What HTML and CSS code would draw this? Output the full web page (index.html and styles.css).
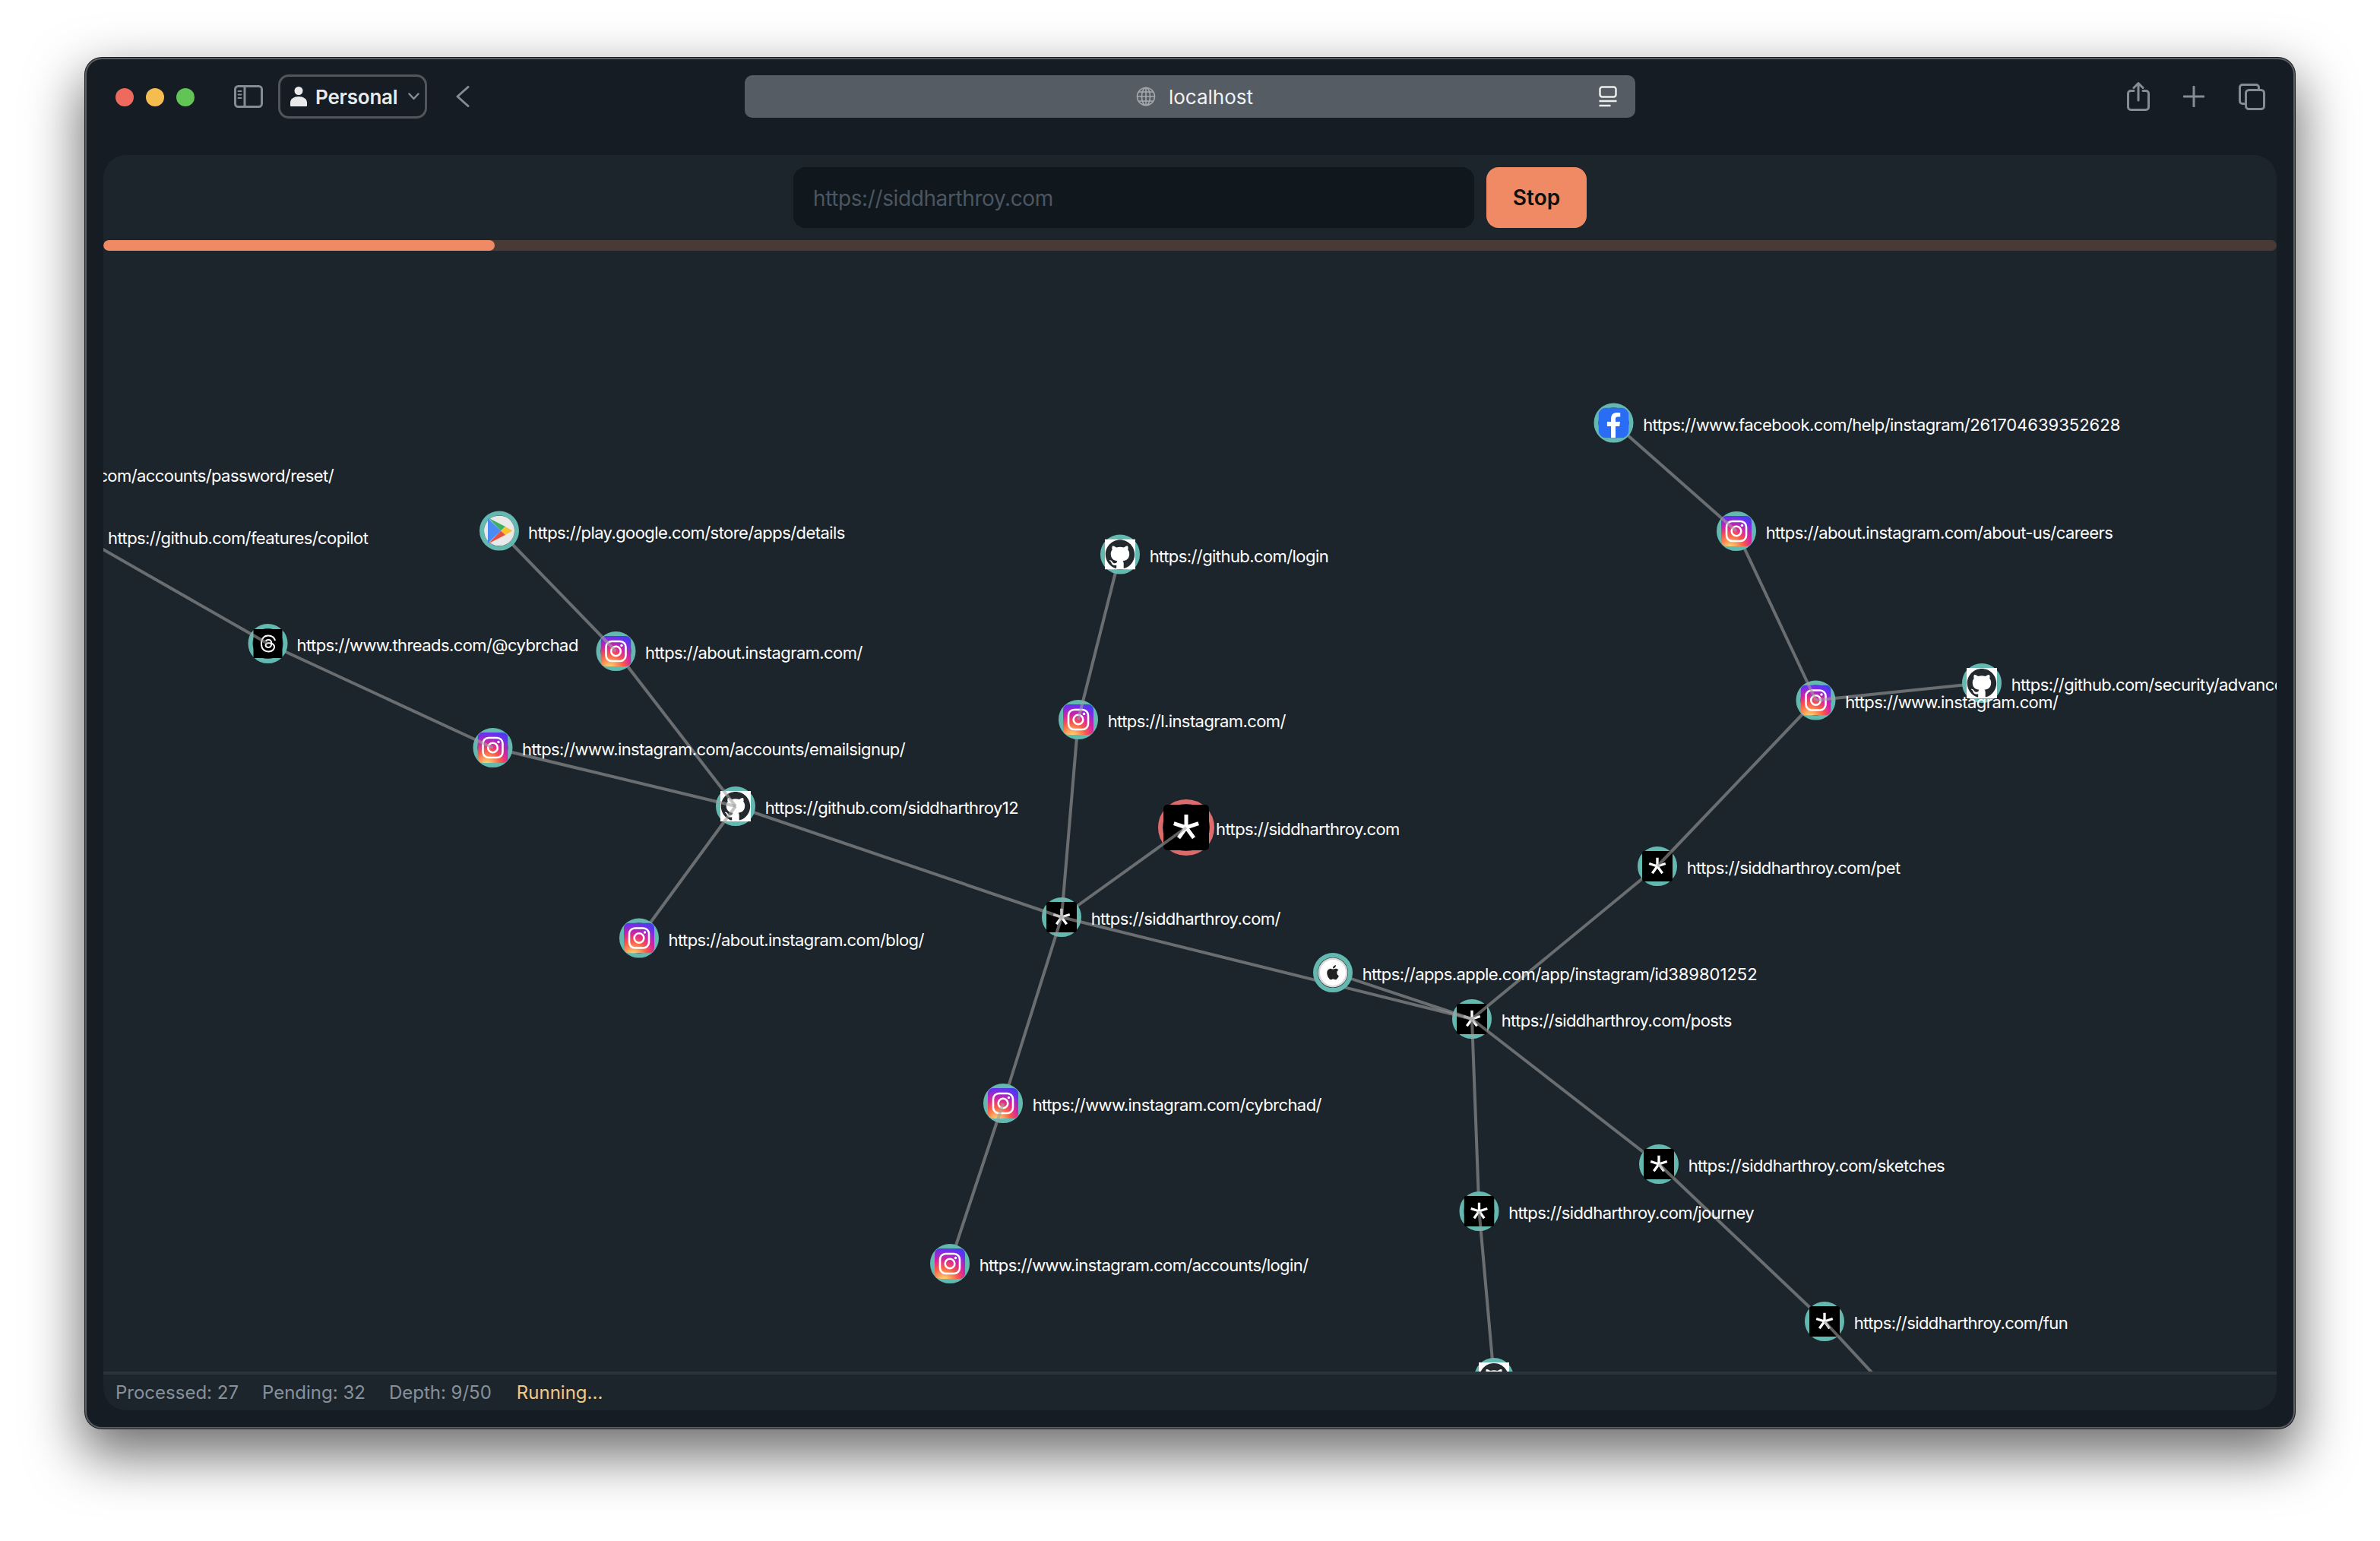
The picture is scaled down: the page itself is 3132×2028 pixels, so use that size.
FILE: index.html
```html
<!DOCTYPE html>
<html lang="en">
<head>
<meta charset="utf-8">
<title>localhost</title>
<link rel="stylesheet" href="styles.css">
</head>
<body>
<div class="window">
  <header class="titlebar">
    <div class="lights"><span class="light red"></span><span class="light yellow"></span><span class="light green"></span></div>
    <svg class="tb-icon sidebar" width="38" height="30" viewBox="0 0 38 30" fill="none"><rect x="1.5" y="1.5" width="35" height="27" rx="4"/><path d="M14 1.5v27"/><path d="M5.5 8h4M5.5 12.5h4M5.5 17h4" stroke-width="2"/></svg>
    <div class="profile">
      <svg class="person" width="22" height="30" viewBox="0 0 22 30"><circle cx="11" cy="7.5" r="5.5"/><path d="M0 27v-4c0-5 5-8 11-8s11 3 11 8v4a1 1 0 0 1-1 1H1a1 1 0 0 1-1-1z"/></svg>
      <span class="profile-name">Personal</span>
      <svg class="tb-icon chev" width="15" height="10" viewBox="0 0 15 10" fill="none"><path d="M1.5 1.5l6 6.5 6-6.5"/></svg>
    </div>
    <svg class="tb-icon back" width="18" height="28" viewBox="0 0 18 28" fill="none"><path d="M16 1.5L2 14l14 12.5"/></svg>
    <div class="urlbar">
      <svg class="globe" width="26" height="26" viewBox="0 0 26 26" fill="none"><circle cx="13" cy="13" r="11.5"/><ellipse cx="13" cy="13" rx="5.5" ry="11.5"/><path d="M13 1.5v23M1.5 13h23M3.5 7h19M3.5 19h19"/></svg>
      <span class="url-text">localhost</span>
      <svg class="reader" width="24" height="28" viewBox="0 0 24 28" fill="none"><rect x="1.5" y="1.5" width="21" height="13" rx="3"/><path d="M0.5 20h23M0.5 26h15"/></svg>
    </div>
    <div class="tb-right">
      <svg class="tb-icon" width="30" height="38" viewBox="0 0 30 38" fill="none"><path d="M9 11.500H5a3.500 3.500 0 0 0-3.500 3.500v18A3.500 3.500 0 0 0 5 36.500h20a3.500 3.500 0 0 0 3.500-3.500V15a3.500 3.500 0 0 0-3.500-3.500h-4"/><path d="M15 24V2M9 7.500L15 1.500l6 6"/></svg>
      <svg class="tb-icon plus" width="28" height="28" viewBox="0 0 28 28" fill="none"><path d="M14 1v26M1 14h26"/></svg>
      <svg class="tb-icon tabs" width="35" height="35" viewBox="0 0 35 35" fill="none"><path d="M8 26.500H5A3.500 3.500 0 0 1 1.500 23V5A3.500 3.500 0 0 1 5 1.500h18A3.500 3.500 0 0 1 26.500 5v3"/><rect x="9.500" y="8.500" width="24" height="25" rx="4"/></svg>
    </div>
  </header>

  <main class="panel">
    <form class="crawl-form">
      <input class="url-input" type="text" placeholder="https://siddharthroy.com">
      <button class="stop" type="button">Stop</button>
    </form>
    <div class="progress"><div class="progress-fill" style="width:18%"></div></div>

    <div class="graph">
      <svg class="graph-svg" width="2860" height="1475" viewBox="136 330 2860 1475">
        <defs>
          <radialGradient id="iggrad" cx="0.3" cy="1.07" r="1.15">
            <stop offset="0" stop-color="#fdf497"/>
            <stop offset="0.1" stop-color="#fdc468"/>
            <stop offset="0.4" stop-color="#fa5a48"/>
            <stop offset="0.62" stop-color="#d6249f"/>
            <stop offset="0.9" stop-color="#6a2ff0"/>
            <stop offset="1" stop-color="#4a3de8"/>
          </radialGradient>
          <symbol id="ig" viewBox="0 0 40 40">
            <rect width="40" height="40" rx="7" fill="url(#iggrad)"/>
            <rect x="7" y="7" width="26" height="26" rx="7.500" fill="none" stroke="#fff" stroke-width="2.600"/>
            <circle cx="20" cy="20" r="6.300" fill="none" stroke="#fff" stroke-width="2.600"/>
            <circle cx="27.500" cy="12.500" r="1.700" fill="#fff"/>
          </symbol>
          <symbol id="gh" viewBox="0 0 40 40">
            <rect width="40" height="40" fill="#fff"/>
            <g transform="translate(0.800 0.500) scale(1.600)"><path fill="#24292e" d="M12 .297c-6.630 0-12 5.373-12 12 0 5.303 3.438 9.800 8.205 11.385.6.113.82-.258.82-.577 0-.285-.01-1.040-.015-2.040-3.338.724-4.042-1.610-4.042-1.610C4.422 18.070 3.633 17.700 3.633 17.700c-1.087-.744.084-.729.084-.729 1.205.084 1.838 1.236 1.838 1.236 1.070 1.835 2.809 1.305 3.495.998.108-.776.417-1.305.76-1.605-2.665-.3-5.466-1.332-5.466-5.930 0-1.310.465-2.380 1.235-3.220-.135-.303-.54-1.523.105-3.176 0 0 1.005-.322 3.300 1.230.96-.267 1.980-.399 3-.405 1.020.006 2.040.138 3 .405 2.280-1.552 3.285-1.230 3.285-1.230.645 1.653.24 2.873.12 3.176.765.84 1.230 1.910 1.230 3.220 0 4.610-2.805 5.625-5.475 5.920.42.36.81 1.096.81 2.220 0 1.606-.015 2.896-.015 3.286 0 .315.21.69.825.57C20.565 22.092 24 17.592 24 12.297c0-6.627-5.373-12-12-12"/></g>
          </symbol>
          <symbol id="star" viewBox="0 0 60 60">
            <rect width="60" height="60" rx="5" fill="#000"/>
            <g stroke="#fff" stroke-width="5" stroke-linecap="butt"><path d="M30 30V13M30 30l16.200-5.300M30 30l10 13.800M30 30l-10 13.800M30 30l-16.200-5.300"/></g>
          </symbol>
          <symbol id="threads" viewBox="0 0 40 40">
            <rect width="40" height="40" fill="#000"/>
            <g transform="translate(8.500 8) scale(1)"><path fill="#fff" d="M12.186 24h-.007c-3.581-.024-6.334-1.205-8.184-3.509C2.350 18.440 1.500 15.586 1.472 12.010v-.017c.03-3.579.879-6.430 2.525-8.482C5.845 1.205 8.600.024 12.180 0h.014c2.746.02 5.043.725 6.826 2.098 1.677 1.290 2.858 3.130 3.509 5.467l-2.040.569c-1.104-3.960-3.898-5.984-8.304-6.015-2.910.022-5.110.936-6.540 2.717C4.307 6.504 3.616 8.914 3.589 12c.027 3.086.718 5.496 2.057 7.164 1.430 1.783 3.631 2.698 6.540 2.717 2.623-.02 4.358-.631 5.800-2.045 1.647-1.613 1.618-3.593 1.090-4.798-.31-.71-.873-1.300-1.634-1.750-.192 1.352-.622 2.446-1.284 3.272-.886 1.102-2.140 1.704-3.730 1.790-1.202.065-2.361-.218-3.259-.801-1.063-.689-1.685-1.740-1.752-2.964-.065-1.190.408-2.285 1.330-3.082.88-.76 2.119-1.207 3.583-1.291a13.853 13.853 0 0 1 3.020.142c-.126-.742-.375-1.332-.75-1.757-.513-.586-1.308-.883-2.359-.89h-.029c-.844 0-1.992.232-2.721 1.320L7.734 7.847c.98-1.454 2.568-2.256 4.478-2.256h.044c3.194.02 5.097 1.975 5.287 5.388.108.046.216.094.321.142 1.490.7 2.580 1.761 3.154 3.070.797 1.820.871 4.790-1.548 7.158-1.850 1.810-4.094 2.628-7.277 2.650Zm1.003-11.690c-.242 0-.487.007-.739.021-1.836.103-2.980.946-2.916 2.143.067 1.256 1.452 1.839 2.784 1.767 1.224-.065 2.818-.543 3.086-3.710a10.500 10.500 0 0 0-2.215-.221z"/></g>
          </symbol>
          <symbol id="apple" viewBox="0 0 40 40">
            <circle cx="20" cy="20" r="19.500" fill="#d8d8d8"/>
            <circle cx="20" cy="20" r="17" fill="#fff"/>
            <g transform="translate(10.500 10) scale(0.800)"><path fill="#222" d="M12.152 6.896c-.948 0-2.415-1.078-3.960-1.040-2.040.027-3.910 1.183-4.961 3.014-2.117 3.675-.546 9.103 1.519 12.090 1.013 1.454 2.208 3.090 3.792 3.039 1.520-.065 2.090-.987 3.935-.987 1.831 0 2.350.987 3.960.948 1.637-.026 2.676-1.480 3.676-2.948 1.156-1.688 1.636-3.325 1.662-3.415-.039-.013-3.182-1.221-3.220-4.857-.026-3.040 2.480-4.494 2.597-4.559-1.429-2.090-3.623-2.324-4.390-2.376-2-.156-3.675 1.090-4.610 1.090zM15.530 3.830c.843-1.012 1.400-2.427 1.245-3.830-1.207.052-2.662.805-3.532 1.818-.78.896-1.454 2.338-1.273 3.714 1.338.104 2.715-.688 3.559-1.701"/></g>
          </symbol>
          <symbol id="play" viewBox="0 0 40 40">
            <circle cx="20" cy="20" r="20" fill="#e9e9e9"/>
            <path fill="#4a8af4" d="M5 3.500v33L22 20z"/>
            <path fill="#3fae5f" d="M5.500 3L28 14.500 22 20z"/>
            <path fill="#f7c334" d="M28 14.500L37.500 20 28 25.500 22 20z"/>
            <path fill="#e5513f" d="M5.500 37L28 25.500 22 20z"/>
          </symbol>
          <symbol id="fb" viewBox="0 0 40 40">
            <rect width="40" height="40" rx="10" fill="#2a6df4"/>
            <path fill="#fff" d="M22.500 40V24.500h5.200l.8-6h-6V15c0-1.800.6-3 3.100-3h3.100V6.800c-.5-.1-2.400-.3-4.500-.3-4.500 0-7.600 2.700-7.600 7.800v4.200h-5.200v6h5.200V40z"/>
          </symbol>
        </defs>

        <g class="node root"><circle cx="1561" cy="1089" r="34"/><use href="#star" x="1531" y="1059" width="60" height="60"/></g>
        <line class="edge" x1="1397" y1="1207" x2="1561" y2="1089"/>
        <g class="node"><circle cx="1397" cy="1207" r="23"/><use href="#star" x="1377" y="1187" width="40" height="40"/></g>

        <line class="edge" x1="1397" y1="1207" x2="968" y2="1061"/>
        <line class="edge" x1="1397" y1="1207" x2="1419" y2="947"/>
        <line class="edge" x1="1397" y1="1207" x2="1320" y2="1452"/>
        <g class="node"><circle cx="968" cy="1061" r="23"/><use href="#gh" x="948" y="1041" width="40" height="40"/></g>
        <g class="node"><circle cx="1419" cy="947" r="23"/><use href="#ig" x="1399" y="927" width="40" height="40"/></g>
        <g class="node"><circle cx="1320" cy="1452" r="23"/><use href="#ig" x="1300" y="1432" width="40" height="40"/></g>

        <line class="edge" x1="968" y1="1061" x2="648.500" y2="984"/>
        <line class="edge" x1="968" y1="1061" x2="810.500" y2="857"/>
        <line class="edge" x1="968" y1="1061" x2="841" y2="1234.500"/>
        <line class="edge" x1="1419" y1="947" x2="1474" y2="729.500"/>
        <line class="edge" x1="1320" y1="1452" x2="1250" y2="1663"/>
        <g class="node"><circle cx="648.500" cy="984" r="23"/><use href="#ig" x="628.500" y="964" width="40" height="40"/></g>
        <g class="node"><circle cx="810.500" cy="857" r="23"/><use href="#ig" x="790.500" y="837" width="40" height="40"/></g>
        <g class="node"><circle cx="841" cy="1234.500" r="23"/><use href="#ig" x="821" y="1214.500" width="40" height="40"/></g>
        <g class="node"><circle cx="1474" cy="729.500" r="23"/><use href="#gh" x="1454" y="709.500" width="40" height="40"/></g>
        <g class="node"><circle cx="1250" cy="1663" r="23"/><use href="#ig" x="1230" y="1643" width="40" height="40"/></g>

        <line class="edge" x1="648.500" y1="984" x2="352.500" y2="847"/>
        <line class="edge" x1="810.500" y1="857" x2="657" y2="698.500"/>
        <g class="node"><circle cx="352.500" cy="847" r="23"/><use href="#threads" x="333" y="828" width="39" height="38"/></g>
        <g class="node"><circle cx="657" cy="698.500" r="23"/><use href="#play" x="637" y="678.500" width="40" height="40"/></g>
        <line class="edge" x1="352.500" y1="847" x2="104" y2="705"/>

        <g class="node"><circle cx="1937" cy="1341" r="23"/><use href="#star" x="1917" y="1321" width="40" height="40"/></g>
        <line class="edge" x1="1397" y1="1207" x2="1937" y2="1341"/>
        <line class="edge" x1="1754" y1="1280" x2="1937" y2="1341"/>
        <g class="node"><circle cx="1754" cy="1280" r="23"/><use href="#apple" x="1734" y="1260" width="40" height="40"/></g>

        <line class="edge" x1="1937" y1="1341" x2="2181" y2="1140"/>
        <line class="edge" x1="1937" y1="1341" x2="2183" y2="1532"/>
        <line class="edge" x1="1937" y1="1341" x2="1946.500" y2="1594"/>
        <g class="node"><circle cx="2181" cy="1140" r="23"/><use href="#star" x="2161" y="1120" width="40" height="40"/></g>
        <g class="node"><circle cx="2183" cy="1532" r="23"/><use href="#star" x="2163" y="1512" width="40" height="40"/></g>
        <g class="node"><circle cx="1946.500" cy="1594" r="23"/><use href="#star" x="1926.500" y="1574" width="40" height="40"/></g>

        <line class="edge" x1="2181" y1="1140" x2="2389.500" y2="921.500"/>
        <g class="node"><circle cx="2389.500" cy="921.500" r="23"/><use href="#ig" x="2369.500" y="901.500" width="40" height="40"/></g>
        <line class="edge" x1="2389.500" y1="921.500" x2="2285" y2="699"/>
        <line class="edge" x1="2389.500" y1="921.500" x2="2608" y2="899"/>
        <g class="node"><circle cx="2285" cy="699" r="23"/><use href="#ig" x="2265" y="679" width="40" height="40"/></g>
        <g class="node"><circle cx="2608" cy="899" r="23"/><use href="#gh" x="2588" y="879" width="40" height="40"/></g>
        <line class="edge" x1="2285" y1="699" x2="2123.500" y2="556.500"/>
        <g class="node"><circle cx="2123.500" cy="556.500" r="23"/><use href="#fb" x="2103.500" y="536.500" width="40" height="40"/></g>

        <line class="edge" x1="2183" y1="1532" x2="2401" y2="1739"/>
        <g class="node"><circle cx="2401" cy="1739" r="23"/><use href="#star" x="2381" y="1719" width="40" height="40"/></g>
        <line class="edge" x1="2401" y1="1739" x2="2500" y2="1846"/>
        <line class="edge" x1="1946.500" y1="1594" x2="1966" y2="1813"/>
        <g class="node"><circle cx="1966" cy="1813" r="23"/><use href="#gh" x="1946" y="1793" width="40" height="40"/></g>

        <g class="labels">
          <text x="439" y="634" text-anchor="end">https://www.instagram.com/accounts/password/reset/</text>
          <text x="142" y="716">https://github.com/features/copilot</text>
          <text x="390.500" y="857">https://www.threads.com/@cybrchad</text>
          <text x="695" y="709">https://play.google.com/store/apps/details</text>
          <text x="849" y="867">https://about.instagram.com/</text>
          <text x="687" y="994">https://www.instagram.com/accounts/emailsignup/</text>
          <text x="1006.700" y="1071">https://github.com/siddharthroy12</text>
          <text x="879.500" y="1244.500">https://about.instagram.com/blog/</text>
          <text x="1512.700" y="740">https://github.com/login</text>
          <text x="1457.700" y="957">https://l.instagram.com/</text>
          <text x="1600" y="1099">https://siddharthroy.com</text>
          <text x="1435.700" y="1217">https://siddharthroy.com/</text>
          <text x="1792.700" y="1290">https://apps.apple.com/app/instagram/id<tspan class="digits">389801252</tspan></text>
          <text x="1975.700" y="1351">https://siddharthroy.com/posts</text>
          <text x="1358.700" y="1462">https://www.instagram.com/cybrchad/</text>
          <text x="1288.700" y="1673">https://www.instagram.com/accounts/login/</text>
          <text x="2221.700" y="1542">https://siddharthroy.com/sketches</text>
          <text x="1985.200" y="1604">https://siddharthroy.com/journey</text>
          <text x="2439.700" y="1749">https://siddharthroy.com/fun</text>
          <text x="2219.700" y="1150">https://siddharthroy.com/pet</text>
          <text x="2428.200" y="931.500">https://www.instagram.com/</text>
          <text x="2646.700" y="909">https://github.com/security/advanced-security</text>
          <text x="2323.700" y="709">https://about.instagram.com/about-us/careers</text>
          <text x="2162.200" y="566.500">https://www.facebook.com/help/instagram/<tspan class="digits">261704639352628</tspan></text>
        </g>
      </svg>
    </div>

    <footer class="status">
      <span>Processed: 27</span>
      <span>Pending: 32</span>
      <span>Depth: 9/50</span>
      <span class="running">Running...</span>
    </footer>
  </main>
</div>
</body>
</html>
```

FILE: styles.css
```css
* { box-sizing: border-box; }

html, body { margin: 0; height: 100%; }

body {
  background: #fff;
  padding: 76px 112px 148px;
  font-family: Inter, "Liberation Sans", sans-serif;
  overflow: hidden;
}

.window {
  height: 1804px;
  display: flex;
  flex-direction: column;
  background: #151c23;
  border-radius: 22px;
  box-shadow: inset 0 0 0 2px #5b5f63, 0 0 0 1px #1a1a1a, 0 30px 70px 6px rgba(0, 0, 0, .56);
  padding: 0 24px 24px;
}

.titlebar {
  height: 128px;
  flex: none;
  display: flex;
  align-items: center;
  padding: 0 0 26px 16px;
}

.lights { display: flex; gap: 16px; margin-top: 2px; }
.light { width: 24px; height: 24px; border-radius: 50%; }
.red { background: #ee6a5f; }
.yellow { background: #f5bd4f; }
.green { background: #61c454; }

.tb-icon { stroke: #858c93; stroke-width: 3; stroke-linecap: round; stroke-linejoin: round; flex: none; }

.sidebar { margin-left: 52px; }

.profile {
  margin-left: 20px;
  width: 196px;
  height: 58px;
  border: 3px solid #50565c;
  border-radius: 14px;
  display: flex;
  align-items: center;
  padding-left: 13px;
}
.person { fill: #e8eaec; flex: none; }
.profile-name { margin-left: 11px; font-size: 26px; font-weight: 600; color: #e8eaec; letter-spacing: -.2px; }
.chev { margin-left: 14px; stroke-width: 2.500; }

.back { margin-left: 38px; }

.urlbar {
  margin-left: 362px;
  width: 1172px;
  height: 56px;
  background: #555c63;
  border-radius: 10px;
  display: flex;
  align-items: center;
  justify-content: center;
  position: relative;
  padding-left: 12px;
}
.globe { stroke: #a4a9ae; stroke-width: 1.600; }
.url-text { margin-left: 17px; font-size: 26px; color: #f0f1f2; }
.reader { position: absolute; right: 24px; top: 14px; stroke: #eceded; stroke-width: 2.500; }

.tb-right { margin-left: auto; display: flex; align-items: center; padding-right: 15px; }
.plus { margin-left: 44px; }
.tabs { margin-left: 45px; }

.panel {
  flex: 1;
  min-height: 0;
  display: flex;
  flex-direction: column;
  background: #1d252c;
  border-radius: 30px;
  overflow: hidden;
}

.crawl-form {
  flex: none;
  display: flex;
  justify-content: center;
  gap: 16px;
  padding: 16px 0;
}

.url-input {
  width: 896px;
  height: 80px;
  background: #10171d;
  border: 0;
  border-radius: 16px;
  padding: 2px 26px 0;
  font: 28px Inter, "Liberation Sans", sans-serif;
  letter-spacing: -.4px;
  outline: none;
}
.url-input::placeholder { color: #4b5661; opacity: 1; }

.stop {
  width: 132px;
  height: 80px;
  background: #f08a64;
  border: 0;
  border-radius: 16px;
  color: #10100f;
  font: 600 28px Inter, "Liberation Sans", sans-serif;
}

.progress { flex: none; height: 14px; background: #4a3a36; border-radius: 7px; overflow: hidden; }
.progress-fill { height: 100%; background: #f08a64; border-radius: 7px; }

.graph { flex: 1; min-height: 0; overflow: hidden; }
.graph-svg { display: block; }

.edge { stroke: rgb(160, 160, 160); stroke-opacity: .6; stroke-width: 4; }

.node circle { fill: #1d252c; stroke: #63b8af; stroke-width: 6; }
.node.root circle { stroke: #dd6b6b; }

.labels text { fill: #fff; font-size: 22px; letter-spacing: -.58px; font-family: Inter, "Liberation Sans", sans-serif; }
.labels .digits { letter-spacing: 0; }

.status {
  flex: none;
  height: 51px;
  border-top: 4px solid #2a323c;
  display: flex;
  align-items: center;
  gap: 31px;
  padding-left: 16px;
  font-size: 24px;
  color: #87919c;
}
.running { color: #f0c987; margin-left: 2px; }
```
